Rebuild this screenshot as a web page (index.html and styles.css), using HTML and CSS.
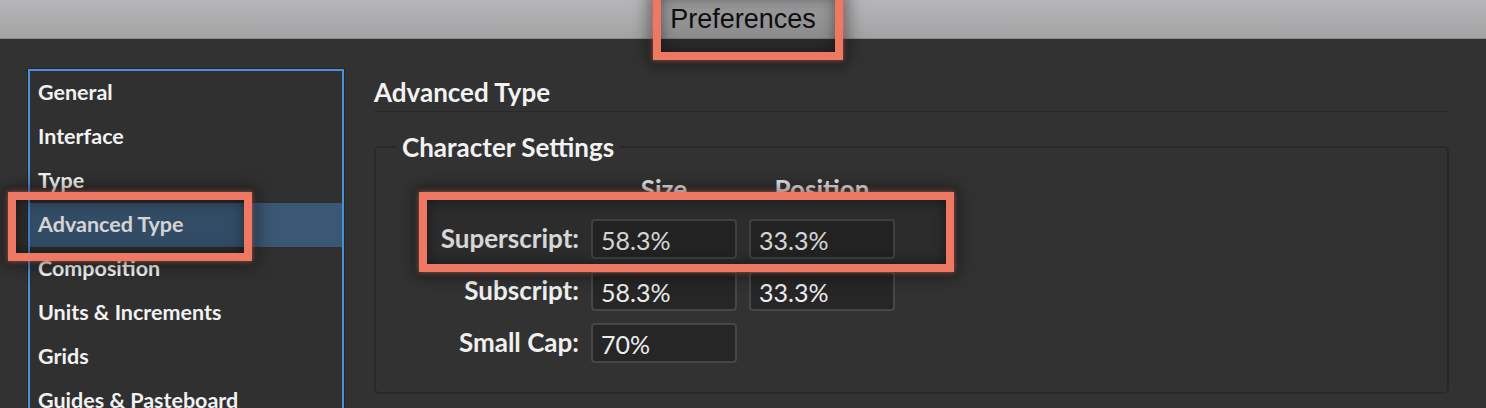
FILE: index.html
```html
<!DOCTYPE html>
<html>
<head>
<meta charset="utf-8">
<title>Preferences</title>
<link rel="stylesheet" href="styles.css">
</head>
<body>
<header class="titlebar"><span class="title">Preferences</span></header>
<div class="main">
  <nav class="sidebar">
    <ul class="menu">
      <li class="item">General</li>
      <li class="item">Interface</li>
      <li class="item">Type</li>
      <li class="item selected">Advanced Type</li>
      <li class="item">Composition</li>
      <li class="item">Units &amp; Increments</li>
      <li class="item">Grids</li>
      <li class="item">Guides &amp; Pasteboard</li>
    </ul>
  </nav>
  <section class="panel">
    <h1 class="heading">Advanced Type</h1>
    <fieldset class="group">
      <legend class="legend">Character Settings</legend>
      <div class="grid">
        <span class="blank"></span>
        <span class="colhead">Size</span>
        <span class="colhead">Position</span>
        <span class="label">Superscript:</span>
        <span class="field">58.3%</span>
        <span class="field">33.3%</span>
        <span class="label">Subscript:</span>
        <span class="field">58.3%</span>
        <span class="field">33.3%</span>
        <span class="label">Small Cap:</span>
        <span class="field">70%</span>
        <span class="blank"></span>
      </div>
    </fieldset>
  </section>
</div>
<div class="mark mark-title"></div>
<div class="mark mark-nav"></div>
<div class="mark mark-row"></div>
</body>
</html>
```
FILE: styles.css
```css
html, body {
  margin: 0;
  padding: 0;
}
body {
  width: 1486px;
  height: 408px;
  overflow: hidden;
  background: #323232;
  font-family: Lato, "Open Sans", sans-serif;
  color: #f1f1f1;
  position: relative;
}
.titlebar {
  height: 38px;
  border-bottom: 1px solid #8b8b8b;
  background: linear-gradient(#b6b6b8, #a3a3a4);
  display: flex;
  justify-content: center;
}
.title {
  font-family: "Liberation Sans", Arial, sans-serif;
  font-size: 27px;
  line-height: 38px;
  color: #111;
}
.main {
  display: flex;
  padding-left: 28px;
}
.sidebar {
  margin-top: 30px;
  width: 316px;
  height: 400px;
  box-sizing: border-box;
  border: 2px solid #4a8fd8;
  box-shadow: 0 0 0 1px #262626;
  background: #303030;
}
.menu {
  list-style: none;
  margin: 0;
  padding: 0;
}
.item {
  height: 44px;
  line-height: 42px;
  padding-left: 8px;
  font-size: 21.5px;
  font-weight: 700;
  color: #f2f2f2;
}
.item.selected {
  background: #3a5773;
}
.panel {
  margin-left: 30px;
  width: 1075px;
}
.heading {
  margin: 38px 0 0;
  height: 30px;
  line-height: 30px;
  padding-bottom: 4px;
  border-bottom: 1px solid #292929;
  font-size: 26px;
  font-weight: 700;
  color: #f2f2f2;
}
.group {
  margin: 21px 0 0;
  padding: 0 0 29px;
  border: 2px solid #292929;
  border-radius: 5px;
  min-width: 0;
}
.legend {
  margin-left: 21px;
  padding: 0 5px;
  font-size: 26px;
  line-height: 28px;
  font-weight: 700;
  color: #f2f2f2;
}
.grid {
  display: grid;
  grid-template-columns: 203px 146px 146px;
  grid-template-rows: 30px 40px 40px 40px;
  column-gap: 12px;
  row-gap: 12px;
  padding-top: 16px;
}
.colhead {
  text-align: center;
  font-size: 26px;
  line-height: 24px;
  font-weight: 700;
  color: #e6e6e6;
}
.label {
  text-align: right;
  font-size: 26px;
  line-height: 38px;
  font-weight: 700;
  color: #f0f0f0;
}
.field {
  box-sizing: border-box;
  height: 40px;
  border: 2px solid #474747;
  border-radius: 4px;
  background: #262626;
  padding-left: 8px;
  font-size: 25px;
  line-height: 38px;
  color: #ededed;
}
.mark {
  position: absolute;
  box-sizing: border-box;
  border: 8px solid #ee7862;
  box-shadow: 0 0 5px rgba(240, 120, 98, 0.6), 0 0 16px 4px rgba(0, 0, 0, 0.45), inset 0 0 14px rgba(0, 0, 0, 0.45);
}
.mark-title {
  left: 653px;
  top: -10px;
  width: 190px;
  height: 70px;
  background: rgba(0, 0, 0, 0.14);
}
.mark-nav {
  left: 8px;
  top: 192px;
  width: 244px;
  height: 69px;
  background: rgba(0, 0, 0, 0.12);
}
.mark-row {
  left: 419px;
  top: 192px;
  width: 535px;
  height: 80px;
  background: rgba(0, 0, 0, 0.1);
}
```
